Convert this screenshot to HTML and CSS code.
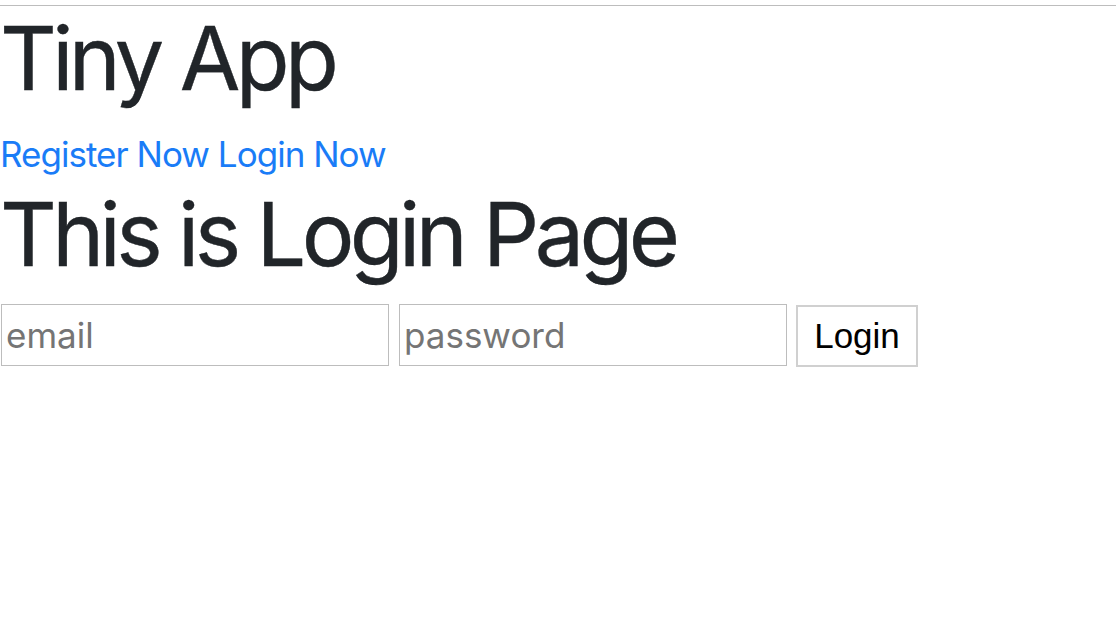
FILE: index.html
```html
<!DOCTYPE html>
<html>
<head>
<meta charset="utf-8">
<link rel="stylesheet" href="styles.css">
</head>
<body>
<div class="topline"></div>
<h1 class="title">Tiny App</h1>
<nav class="links"><a href="#">Register Now</a> <a href="#">Login Now</a></nav>
<h1 class="title">This is Login Page</h1>
<form class="login">
  <input class="field" type="text" placeholder="email">
  <input class="field" type="password" placeholder="password">
  <button class="btn" type="button">Login</button>
</form>
</body>
</html>
```
FILE: styles.css
```css
html, body { margin: 0; padding: 0; background: #fff; }
body { font-family: Inter, "Noto Sans", sans-serif; color: #212529; }
.topline { height: 1px; background: #bdbdbd; margin-top: 5px; }
.title { font-size: 88px; font-weight: 400; line-height: 1.2; margin: 0 0 16px 0; letter-spacing: -0.053em; -webkit-text-stroke: 0.4px #212529; }
.links { font-size: 35px; line-height: 1.5; letter-spacing: -0.028em; margin-bottom: 2px; }
.links a { color: #1a7cf7; text-decoration: none; }
.login { display: flex; align-items: flex-start; gap: 10px; margin-top: 11px; padding-left: 1px; }
.field { width: 388px; height: 62px; box-sizing: border-box; border: 1px solid #bdbdbd; padding: 0 4px; font-family: Inter, sans-serif; font-size: 35px; color: #333; margin: 0; }
.field::placeholder { color: #757575; }
.btn { height: 62px; width: 122px; box-sizing: border-box; margin: 1px 0 0 -1px; background: #fff; border: 2px solid #d0d0d0; font-family: "Liberation Sans", Arial, sans-serif; font-size: 35px; color: #000; padding: 0; }
```
